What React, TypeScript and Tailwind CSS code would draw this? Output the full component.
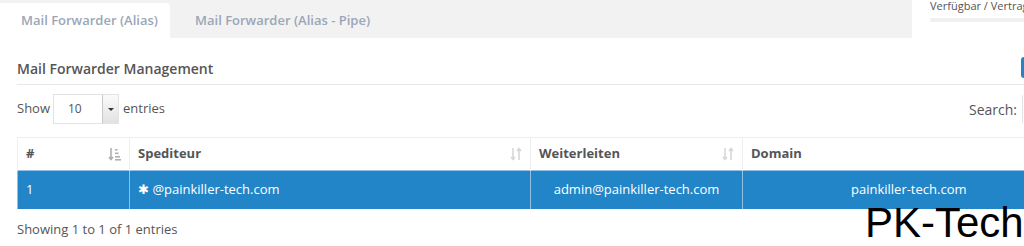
import React from 'react';

const SortBoth = () => (
  <svg width="12" height="14" viewBox="0 0 12 14" className="text-[#d8d8d8]">
    <path d="M3 1v11M1 10l2 2.5 2-2.5" stroke="currentColor" strokeWidth="1.6" fill="none" />
    <path d="M9 13V2M7 4l2-2.5 2 2.5" stroke="currentColor" strokeWidth="1.6" fill="none" />
  </svg>
);

const SortAsc = () => (
  <svg width="13" height="14" viewBox="0 0 13 14" className="text-[#b0b0b0]">
    <path d="M3 1v11M1 10l2 2.5 2-2.5" stroke="currentColor" strokeWidth="1.6" fill="none" />
    <rect x="7" y="2" width="2.5" height="1.6" fill="currentColor" />
    <rect x="7" y="5.5" width="3.5" height="1.6" fill="currentColor" />
    <rect x="7" y="9" width="5" height="1.6" fill="currentColor" />
    <rect x="7" y="12" width="6" height="1.6" fill="currentColor" />
  </svg>
);

const App: React.FC = () => {
  return (
    <div className="relative w-[1024px] h-[246px] overflow-hidden bg-white font-['Open_Sans',sans-serif] text-[13px] text-[#555]">
      {/* tabs + quota */}
      <div className="flex h-[38px]">
        <div className="w-[912px] shrink-0 bg-[#f2f2f2] flex items-end">
          <div className="w-[170px] h-[35px] bg-white rounded-tr-[4px] flex items-center pl-[21px] font-semibold text-[#9ba6b7]">
            Mail Forwarder (Alias)
          </div>
          <div className="h-[35px] flex items-center pl-[25px] font-semibold text-[#9ba6b7]">
            Mail Forwarder (Alias - Pipe)
          </div>
        </div>
        <div className="w-[200px] shrink-0 pl-[18px]">
          <div className="text-[11px] leading-[12px] text-[#555] whitespace-nowrap">Verfügbar / Vertrag</div>
          <div className="mt-[6px] h-[4px] w-[150px] rounded-full bg-[#f0f0f0]" />
        </div>
      </div>

      <div className="w-[1100px] pl-[17px]">
        {/* heading */}
        <div className="flex items-center h-[47px] border-b border-[#e8e8e8] relative">
          <div className="text-[14px] font-semibold text-[#555] pt-[15px]">Mail Forwarder Management</div>
          <div className="absolute left-[1004px] top-[19px] w-[10px] h-[21px] bg-[#2185c8] rounded-l-[3px]" />
        </div>

        {/* length + search */}
        <div className="flex items-center h-[48px] w-[1007px]">
          <span>Show</span>
          <div className="ml-[3px] flex h-[30px] w-[66px] border border-[#e3e3e3]">
            <div className="flex-1 flex items-center pl-[14px] text-[12px] text-[#555]">10</div>
            <div className="w-[16px] border-l border-[#c8c8c8] bg-gradient-to-b from-[#fafafa] to-[#e2e2e2] flex items-center justify-center">
              <div className="w-0 h-0 border-l-[3px] border-r-[3px] border-t-[3px] border-l-transparent border-r-transparent border-t-[#333]" />
            </div>
          </div>
          <span className="ml-[4px]">entries</span>
          <span className="ml-auto text-[14px]">Search:</span>
          <div className="ml-[5px] h-[28px] w-[2px] border-l border-[#e3e3e3]" />
        </div>

        {/* table */}
        <table className="mt-[4px] border-collapse table-fixed w-[1057px]">
          <colgroup>
            <col className="w-[112px]" />
            <col className="w-[401px]" />
            <col className="w-[212px]" />
            <col className="w-[332px]" />
          </colgroup>
          <thead>
            <tr className="h-[33px] border-t border-[#eeeeee]">
              <th className="border-l border-[#eeeeee] px-[8px] text-left font-bold text-[#555]">
                <div className="flex items-center justify-between">
                  <span>#</span>
                  <SortAsc />
                </div>
              </th>
              <th className="border-l border-[#eeeeee] px-[8px] text-left font-bold text-[#555]">
                <div className="flex items-center justify-between">
                  <span>Spediteur</span>
                  <SortBoth />
                </div>
              </th>
              <th className="border-l border-[#eeeeee] px-[8px] text-left font-bold text-[#555]">
                <div className="flex items-center justify-between">
                  <span>Weiterleiten</span>
                  <SortBoth />
                </div>
              </th>
              <th className="border-l border-[#eeeeee] px-[8px] text-left font-bold text-[#555]">Domain</th>
            </tr>
          </thead>
          <tbody>
            <tr className="h-[38px] bg-[#2185c8] text-white border-t border-[#8fc0e3]">
              <td className="px-[8px] border-l border-[#8fc0e3]">1</td>
              <td className="px-[8px] border-l border-[#8fc0e3]">✱ @painkiller-tech.com</td>
              <td className="px-[8px] border-l border-[#8fc0e3] text-center">admin@painkiller-tech.com</td>
              <td className="px-[8px] border-l border-[#8fc0e3] text-center">painkiller-tech.com</td>
            </tr>
          </tbody>
        </table>

        <div className="mt-[11px] text-[13px] text-[#555]">Showing 1 to 1 of 1 entries</div>
      </div>

      <div className="absolute left-[865px] top-[200px] font-['Liberation_Sans',sans-serif] text-[42px] leading-[46px] text-black">
        PK-Tech
      </div>
    </div>
  );
};

export default App;
